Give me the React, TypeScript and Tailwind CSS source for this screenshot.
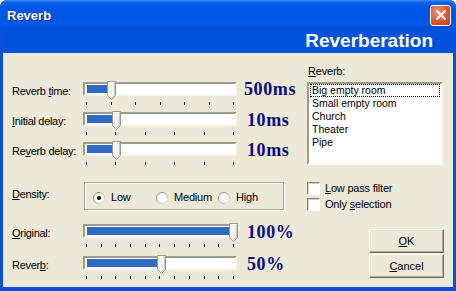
import type { ReactNode } from "react"

const ui = "font-['Liberation_Sans',Arial,sans-serif] text-[11px] text-black"

function Mn({ text, at }: { text: string; at: number }) {
  return (
    <>
      {text.slice(0, at)}
      <span className="underline underline-offset-[1px]">{text[at]}</span>
      {text.slice(at + 1)}
    </>
  )
}

function Thumb({ left }: { left: number }) {
  return (
    <svg className="absolute top-[-3px]" style={{ left }} width="10" height="19" viewBox="0 0 10 19">
      <path d="M0.5 0.5H8.5V14.5L4.5 18.5L0.5 14.5Z" fill="#F4F3EE" stroke="#9C9A8D" />
      <path d="M7.5 1.5V14L4.5 17" fill="none" stroke="#C8C6B9" />
      <path d="M1.5 14V1.5H7" fill="none" stroke="#FFFFFF" />
    </svg>
  )
}

function Slider({ thumb, ticks }: { thumb: number; ticks: number }) {
  return (
    <div className="w-[154px]">
      <div className="relative h-[14px] border-2 border-t-[#9D9B8E] border-l-[#9D9B8E] border-r-[#F7F6F0] border-b-[#F7F6F0] bg-white">
        <div className="absolute left-[2px] top-[1px] h-[8px] bg-[#316AC5]" style={{ width: thumb - 2 }} />
        <Thumb left={thumb} />
      </div>
      <div className="ml-[3px] mt-[6px] flex w-[148px] justify-between">
        {Array.from({ length: ticks }).map((_, i) => (
          <div key={i} className="h-[3px] w-px bg-black" />
        ))}
      </div>
    </div>
  )
}

function SliderRow({
  label,
  thumb,
  ticks,
  value,
  valueClass,
  height,
}: {
  label: ReactNode
  thumb: number
  ticks: number
  value: string
  valueClass: string
  height: string
}) {
  return (
    <div className={`flex items-start ${height}`}>
      <div className="mt-[2px] w-[71px] leading-[14px] tracking-[-0.3px]">{label}</div>
      <Slider thumb={thumb} ticks={ticks} />
      <div
        className={`leading-[14px] font-['Liberation_Serif','Times_New_Roman',serif] text-[18px] font-bold tracking-[0.6px] text-[#0A0A86] ${valueClass}`}
      >
        {value}
      </div>
    </div>
  )
}

function Radio({ label, checked, width }: { label: string; checked?: boolean; width: string }) {
  return (
    <div className={`flex items-center gap-[6px] ${width}`}>
      <svg width="12" height="12" viewBox="0 0 12 12">
        <defs>
          <linearGradient id="rb" x1="0" y1="0" x2="1" y2="1">
            <stop offset="0" stopColor="#7E7C72" />
            <stop offset="0.5" stopColor="#A8A699" />
            <stop offset="1" stopColor="#F4F3EE" />
          </linearGradient>
        </defs>
        <circle cx="6" cy="6" r="5.5" fill="#FFFFFF" stroke="url(#rb)" />
        {checked && <circle cx="6" cy="6" r="2" fill="#000000" />}
      </svg>
      <span className="tracking-[-0.2px]">{label}</span>
    </div>
  )
}

function Check({ label }: { label: ReactNode }) {
  return (
    <div className="flex h-[16px] items-start gap-[5px]">
      <div className="h-[13px] w-[13px] border border-t-[#878579] border-l-[#878579] border-r-white border-b-white bg-white shadow-[inset_1px_1px_0_#D2D0C4]" />
      <span className="leading-[13px] tracking-[-0.2px]">{label}</span>
    </div>
  )
}

function Button({ children }: { children: ReactNode }) {
  return (
    <div className="flex h-[24px] w-[75px] items-center justify-center border border-t-white border-l-white border-r-[#716F64] border-b-[#716F64] bg-[#ECE9D8] shadow-[inset_-1px_-1px_0_#ACA899]">
      {children}
    </div>
  )
}

const presets = ["Small empty room", "Church", "Theater", "Pipe"]

export default function App() {
  return (
    <div className={`h-[291px] w-[456px] bg-white ${ui}`}>
      <div className="flex h-full flex-col overflow-hidden rounded-t-[7px] bg-[#0B4ED8]">
        <div className="flex h-[29px] shrink-0 items-center justify-between pl-[7px] pr-[5px] bg-[linear-gradient(180deg,#3D8DF5_0%,#0F63EE_8%,#0058E8_22%,#0055E5_60%,#005BEB_85%,#004BD8_100%)]">
          <span className="mt-[2px] text-[13px] font-bold text-white [text-shadow:1px_1px_0_#0A2A8A]">Reverb</span>
          <div className="mt-[1px] flex h-[21px] w-[21px] items-center justify-center rounded-[3px] border border-white bg-[radial-gradient(circle_at_35%_30%,#F19474_0%,#E0542D_55%,#C23A14_100%)]">
            <svg width="10" height="10" viewBox="0 0 10 10">
              <path d="M1 1L9 9M9 1L1 9" stroke="white" strokeWidth="2.2" strokeLinecap="square" />
            </svg>
          </div>
        </div>

        <div className="flex flex-1 flex-col px-[3px] pb-[4px]">
          <div className="flex h-[24px] shrink-0 items-center justify-end bg-[#0052DB] pr-[20px] text-[19px] font-bold text-white">
            Reverberation
          </div>

          <div className="flex flex-1 bg-[#ECE9D8]">
            <div className="w-[304px] pl-[9px] pt-[29px]">
              <SliderRow
                label={<Mn text="Reverb time:" at={7} />}
                thumb={22}
                ticks={7}
                value="500ms"
                valueClass="ml-[7px]"
                height="h-[30px]"
              />
              <SliderRow
                label={<Mn text="Initial delay:" at={0} />}
                thumb={27}
                ticks={6}
                value="10ms"
                valueClass="ml-[10px] mt-[1px]"
                height="h-[30px]"
              />
              <SliderRow
                label={<Mn text="Reverb delay:" at={2} />}
                thumb={27}
                ticks={6}
                value="10ms"
                valueClass="ml-[10px] mt-[1px]"
                height="h-[40px]"
              />

              <div className="flex h-[42px] items-start">
                <div className="mt-[5px] w-[72px] leading-[14px] tracking-[-0.3px]">
                  <Mn text="Density:" at={0} />
                </div>
                <div className="flex h-[28px] w-[200px] items-center border border-[#ACA899] pl-[8px] pt-[3px] shadow-[inset_1px_1px_0_#fff,1px_1px_0_#fff]">
                  <Radio label="Low" checked width="w-[63px]" />
                  <Radio label="Medium" width="w-[62px]" />
                  <Radio label="High" width="w-[50px]" />
                </div>
              </div>

              <SliderRow
                label={<Mn text="Original:" at={0} />}
                thumb={144}
                ticks={11}
                value="100%"
                valueClass="ml-[10px] mt-[1px]"
                height="h-[32px]"
              />
              <SliderRow
                label={<Mn text="Reverb:" at={5} />}
                thumb={72}
                ticks={11}
                value="50%"
                valueClass="ml-[10px] mt-[1px]"
                height="h-[30px]"
              />
            </div>

            <div className="flex w-[137px] flex-col pt-[11px]">
              <div className="pl-[1px] leading-[14px] tracking-[-0.2px]">
                <Mn text="Reverb:" at={0} />
              </div>
              <div className="mt-[4px] h-[83px] w-[136px] border-2 border-t-[#9D9B8E] border-l-[#9D9B8E] border-r-[#F7F6F0] border-b-[#F7F6F0] bg-white text-[10.5px]">
                <div className="mx-[1px] border border-dotted border-black px-[1px] leading-[11px]">Big empty room</div>
                {presets.map((p) => (
                  <div key={p} className="pl-[3px] leading-[13px]">
                    {p}
                  </div>
                ))}
              </div>

              <div className="mt-[17px]">
                <Check label={<Mn text="Low pass filter" at={0} />} />
                <Check label={<Mn text="Only selection" at={5} />} />
              </div>

              <div className="mt-[15px] flex flex-col items-end gap-[1px]">
                <Button>
                  <Mn text="OK" at={0} />
                </Button>
                <Button>
                  <Mn text="Cancel" at={0} />
                </Button>
              </div>
            </div>
          </div>
        </div>
      </div>
    </div>
  )
}
